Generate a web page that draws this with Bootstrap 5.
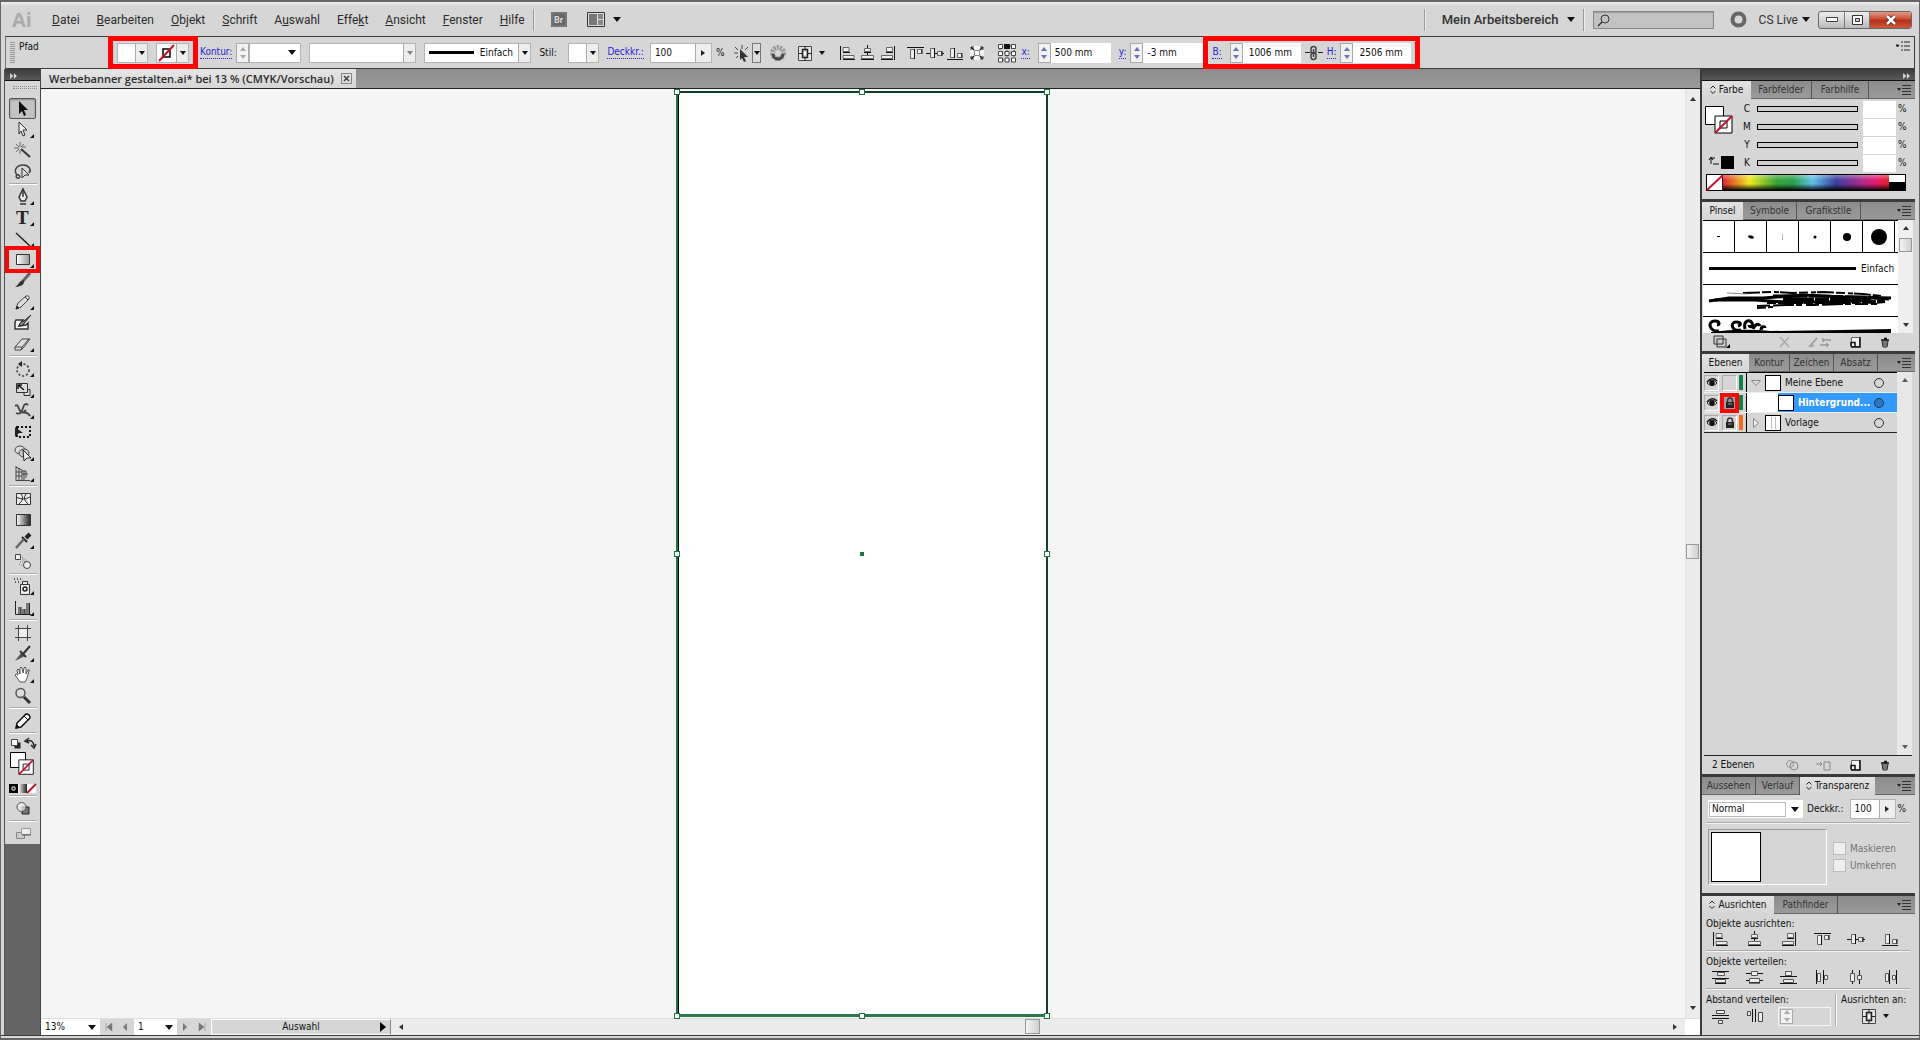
<!DOCTYPE html>
<html lang="de">
<head>
<meta charset="utf-8">
<meta name="viewport" content="width=device-width, initial-scale=1">
<title>Werbebanner gestalten.ai</title>
<link href="https://cdn.jsdelivr.net/npm/bootstrap@5.3.0/dist/css/bootstrap.min.css" rel="stylesheet">
<style>
:root{--face:#d6d6d6;--ink:#111;--edge:#3c3c3c;--ui:"DejaVu Sans Condensed","DejaVu Sans",sans-serif;--menu:Roboto,"Open Sans",sans-serif}
body{font-family:var(--ui);font-size:10px;line-height:12px;color:var(--ink);background:var(--face);overflow:hidden}
.app{height:100vh;border:1px solid #666;border-top-width:2px;border-bottom-width:2px}
button,input,select{font:inherit;color:inherit;border-radius:0;margin:0}
button{background:none;border:0;padding:0;line-height:0}
svg{display:block;overflow:visible}
.ico{width:20px;height:20px}
/* title and menu bar */
.titlebar{height:34px;font-family:var(--menu);font-size:12px;padding:1px 7px 0 11px;color:#333;background:linear-gradient(#f0f0f0,#d6d6d6 4px)}
.logo-ai{font:bold 20px "Open Sans",sans-serif;color:#aaa;width:40px}
.titlebar a{color:#2b2b2b;text-decoration:none}
.menu{gap:17px}
.vline{width:2px;height:22px;border-left:1px solid #999;border-right:1px solid #eee}
.space{font-size:13px;font-weight:500}
.search{width:121px;height:18px;background:#c2c2c2;border:1px solid #888;box-shadow:inset 0 1px 1px #999;position:relative}
.search input{width:100%;height:100%;background:none;border:0;padding:0 4px 0 22px}
.search svg{position:absolute;left:3px;top:2px}
.winbtns{border:1px solid #666;border-radius:3px;height:18px;overflow:hidden;background:linear-gradient(#eee,#bbb)}
.winbtns button{width:25px;height:16px;display:flex;align-items:center;justify-content:center}
.winbtns button+button{border-left:1px solid #777}
.winbtns .close-win{width:42px;background:linear-gradient(#e39a86,#cb4b33 45%,#b32c17 50%,#cf5a3d)}
/* control bar */
.control{height:33px;border:1px solid var(--edge);border-left-color:#777;margin:0 4px;background:var(--face);padding-left:4px}
.grip{width:5px;height:22px;background:repeating-linear-gradient(#999 0 1px,transparent 1px 2px)}
.objtype{width:89px}
.fld{background:#fff;border:1px solid #b4b4b4;height:20px}
.fld input{border:0;padding:0 0 0 4px;background:none;min-width:0;width:100%;height:100%}
.fld input.mm{padding-left:6px}
.w-sw{width:31px}.w-weight{width:52px}.w-combo{width:107px}.w-op{width:62px}.w-num{width:60px}.w-wh{width:58px}
.w-stil{width:33px}
.dd{width:12px;height:100%;background:#eee;border-left:1px solid #aaa;display:flex;align-items:center;justify-content:center;flex:none}
.dd.wide{width:16px}
.dd.pick{width:9px;height:20px;background:#ddd;border:1px solid #777}
.tri{width:0;height:0;border:4px solid transparent;border-top:5px solid #111;border-bottom:0;display:block}
.tri-s{border-width:3px;border-top-width:4px;border-bottom-width:0}
.tri-r{width:0;height:0;border:3px solid transparent;border-left:4px solid #222;border-right:0;display:block}
.lk{color:#2a22d8;text-decoration:none;border-bottom:1px dotted #2a22d8;line-height:12px}
.redbox+.lk{margin-left:2px}
.spin{width:13px;height:20px;border:1px solid #aaa;background:#f2f2f2;flex:none;display:flex;flex-direction:column;align-items:center;justify-content:center;gap:4px}
.spin::before,.spin::after{content:"";border:3px solid transparent}
.spin::before{border-bottom:4px solid #6a74b8;border-top:0}
.spin::after{border-top:4px solid #6a74b8;border-bottom:0}
.spin.off::before{border-bottom-color:#aaa}.spin.off::after{border-top-color:#aaa}
.redbox{border:5px solid #fb0505;height:33px;flex:none;padding:0 4px}
.lk+.w-op{margin-left:6px}
/* dock heads */
.dockhead{height:12px;background:linear-gradient(#3a3a3a,#5a5a5a);border-bottom:1px solid #111;flex:none}
/* tools */
.workspace{min-height:0}
.toolbox{width:37px;background:#646464;border-left:1px solid #555;border-right:1px solid #444;flex:none;margin-left:3px}
.toolset{background:var(--face);padding:0 3px 0 4px}
.hgrip{height:3px;width:24px;margin:5px 0 9px 4px;border-top:1px dotted #888;border-bottom:1px dotted #888}
.tool{width:27px;height:21px;position:relative;display:flex;align-items:center;justify-content:center}
.tool.sub::after{content:"";position:absolute;right:2px;bottom:2px;border:solid transparent;border-width:0 0 4px 4px;border-bottom-color:#111}
.tool.active{border:1px solid #555;border-radius:2px;background:#c4c4c4;box-shadow:inset 0 1px 2px #888}
.tool.marked::before{content:"";position:absolute;left:-4px;right:-4px;top:-3px;bottom:-3px;border:4px solid #fb0505;z-index:2}
.sep{height:2px;margin:1px 0;border-top:1px solid #aaa;border-bottom:1px solid #fff}
/* document */
.docpane{min-width:0}
.doctabs{height:20px;background:linear-gradient(#8d8d8d,#9b9b9b);border-bottom:1px solid #222;flex:none}
.doctab{background:linear-gradient(#e6e6e6,#d6d6d6);padding:0 4px 0 8px;gap:7px;font:600 11px/18px "Open Sans",sans-serif;color:#2b2b2b}
.tabx{width:11px;height:11px;border:1px solid #888}
.canvas{background:#f5f5f5;min-height:0}
.artwrap{padding:2px 0 1px}
.artboard{height:100%;aspect-ratio:372/925;background:#fff;position:relative;border:2px solid #1c7445;border-top-color:#123f29;border-bottom:3px solid #2a7a50;border-right-color:#123f29;box-shadow:inset 1px 0 #000;margin-right:2px}
.handles{position:absolute;inset:-1px -1px -2px -1px}
.hnd{position:absolute;width:6px;height:6px;background:#fff;border:1px solid #1c7445;transform:translate(-50%,-50%)}
.hnd.dot{width:4px;height:4px;background:#1c7445}
.x0{left:0}.x1{left:50%}.x2{left:100%}.y0{top:0}.y1{top:50%}.y2{top:100%}
.vscroll{width:15px;background:#ececec;border-left:1px solid #e4e4e4;flex:none}
.au,.ad{border:3px solid transparent;display:block;width:0}
.au{border-bottom:4px solid #333;border-top:0}.ad{border-top:4px solid #333;border-bottom:0}
.thumb{border:1px solid #999;background:linear-gradient(90deg,#f4f4f4,#cfcfcf);position:absolute}
.thumb.tv{left:0;right:1px;top:49%;height:15px}
.thumb.th{left:49%;width:15px;top:0;bottom:1px}
.thumb.tp{left:1px;width:13px;top:18px;height:14px}
.status{height:17px;background:var(--face);border-top:1px solid #ddd;flex:none}
.status>button{width:17px;display:flex;align-items:center;justify-content:center}
.pagebox{background:#fff;display:flex;align-items:center;justify-content:space-between;padding:0 4px}
.w-zoom{width:59px}.w-page{width:43px}
.statlabel{width:180px;border:1px solid #fff;border-right-color:#888;padding:0 4px 0 10px}
.hscroll{background:#ececec}
.corner{width:15px}
/* panels */
.panels{width:215px;border-left:2px solid #3a3a3a;background:var(--face);flex:none;margin-right:4px}
.ptabs{height:18px;background:linear-gradient(#8c8c8c,#9a9a9a);border-bottom:1px solid #666;flex:none}
.ptabs button{height:18px;line-height:16px;border-right:1px solid #555;color:#333;text-align:center;white-space:nowrap;overflow:hidden;display:flex;align-items:center;justify-content:center;gap:3px}
.ptabs .on{background:linear-gradient(#e2e2e2,#d6d6d6);color:#111;border-right:0}
.gap-dark{height:3px;background:#3a3a3a;flex:none}
.w40{width:41px}.w47{width:47px}.w49{width:49px}.w54{width:54px}.w61{width:61px}.w57{width:57px}.w64{width:64px}.w44{width:44px}.w75{width:75px}.w72{width:72px}
.colorbody{padding:1px 0 0 3px;height:75px}
.slide{width:101px;height:6px;border:1px solid #000;background:#d0d0d0;appearance:none;margin:0}
.slide::-webkit-slider-thumb{appearance:none;width:0;height:0}
.crow{height:18px;gap:5px}
.crow label{width:10px;text-align:center}
.crow .cval{width:33px;height:17px;border:0;background:#fff;margin-right:-3px}
.specwrap{padding:0 4px 8px}
.spectrum{height:17px;border:1px solid #000;display:flex;width:200px}
.rainbow{flex:1;background:linear-gradient(rgba(255,255,255,.35),transparent 35%,transparent 60%,rgba(0,0,0,.9)),linear-gradient(90deg,#e0252f,#f0ea20 16%,#3aa535 32%,#2d9f4a 42%,#62bfe8 54%,#3a3f9f 68%,#b02a8c 84%,#e61c6a 93%,#e02028)}
.bw{width:16px;background:linear-gradient(#fff 50%,#000 50%)}
.brushes{background:#fff;border-top:1px solid #000;height:113px;overflow:hidden;width:195px;margin-left:1px}
.bcell{width:32px;height:31px;border-right:1px solid #000;display:flex;align-items:center;justify-content:center}
.bline{height:32px;border-top:1px solid #000}
.sbar{width:15px;background:#efefef;position:relative;padding:6px 0}
.pfoot{height:18px;gap:17px;padding:0 23px 0 10px;flex:none}
.laybody{min-height:0;margin:0 3px 0 2px}
.layers{width:195px;border-top:1px solid #000}
.lrow{height:20px;border-bottom:1px solid #eee}
.lcell{width:15px;height:16px;border:1px solid #aaa;border-right-color:#fff;border-bottom-color:#fff;display:flex;align-items:center;justify-content:center}
.lcell+.lcell{margin-left:3px}
.lcell.redcell{box-shadow:0 0 0 2px #fb0505;border:2px solid #fb0505;background:#a0a0a0}
.lbar{width:4px;height:15px;margin:0 3px 0 2px;background:#138048}
.lbar.orange{background:#f26a1b}
.lthumb{width:16px;height:16px;border:1px solid #000;background:#fff}
.lname{border-left:1px solid #000;height:100%;padding-right:13px}
.lname.picked{background:linear-gradient(90deg,#fff 31px,#39f 31px);padding-left:31px;color:#fff;font-weight:bold}
.closed{margin:0 6px}
.ring{width:10px;height:10px;border:1px solid #333;border-radius:50%;margin-left:auto}
.picked .ring{background:#2678c4}
.hrule{height:2px;border-top:1px solid #aaa;border-bottom:1px solid #f4f4f4;margin:0 5px 0 4px}
.modes{height:27px;padding-left:6px}
.selwrap{width:95px;height:18px;background:#fff;position:relative}
.selwrap select{width:77px;height:15px;border:1px solid #bbb;background:#fff;appearance:none;padding:0 2px;position:relative;margin:2px 0 0 1px;display:block}
.selwrap .tri{position:absolute;right:4px;top:7px}
.w-top{width:46px;margin:0 2px 0 6px}
.transp{padding:5px 0 8px 6px}
.prev{width:119px;height:56px;border:1px solid #999;border-right-color:#fff;border-bottom-color:#fff;padding:2px}
.prev div{width:50px;height:50px;border:1px solid #000;background:#fff}
.opts{gap:4px;padding-left:6px}
.chk{appearance:none;width:13px;height:13px;background:#eee;border:1px solid #bbb}
.six{gap:14px;padding-left:8px;margin-top:-1px;padding-bottom:1px}
.plabel{padding:4px 0 0 4px}
.spread{height:45px;padding:4px 0 0 4px}
.spread-l{width:129px}
.spread-row{padding-left:4px;gap:14px}
.gapfld{width:53px;height:19px;padding:1px;border:1px solid #f4f4f4}
.vrule{width:2px;height:32px;border-left:1px solid #aaa;border-right:1px solid #fff}
.alignto{padding-left:18px}
.botframe{height:3px;background:var(--face);border-top:1px solid #3c3c3c;flex:none}
</style>
<script src="https://cdn.jsdelivr.net/npm/bootstrap@5.3.0/dist/js/bootstrap.bundle.min.js"></script>
</head>
<body>
<svg width="0" height="0" class="position-absolute">
<defs>
<linearGradient id="g1"><stop offset="0" stop-color="#fff"/><stop offset="1" stop-color="#999"/></linearGradient>
<linearGradient id="g2"><stop offset="0" stop-color="#fff"/><stop offset="1" stop-color="#222"/></linearGradient>
<g id="al"><path d="M3.500 3v14" stroke="#111"/><path d="M6 4.500h6v4H6zM6 12.500h11v3H6z" fill="#eee" stroke="#666"/><path d="M6 16.500h12M6 9.500h7" stroke="#111"/></g>
<g id="ac"><path d="M10.500 2v15" stroke="#111"/><path d="M7.500 5.500h6v3h-6zM4.500 12.500h12v3h-12z" fill="#eee" stroke="#666"/><path d="M4 16.500h13M7 9.500h7" stroke="#111"/></g>
<g id="ar"><path d="M17.500 3v14" stroke="#111"/><path d="M9.500 4.500h6v4h-6zM4.500 12.500h11v3h-11z" fill="#eee" stroke="#666"/><path d="M4 16.500h12M9 9.500h7" stroke="#111"/></g>
<g id="at"><path d="M2 4.500h17" stroke="#111"/><path d="M5.500 6.500h4v9h-4zM12.500 6.500h4v4h-4z" fill="#eee" stroke="#666"/><path d="M9.500 6v10M17 6v5" stroke="#111"/></g>
<g id="am"><path d="M1 10.500h18" stroke="#111"/><path d="M5.500 5.500h4v9h-4zM12.500 8.500h4v4h-4z" fill="#eee" stroke="#666"/><path d="M9.500 5v10M17 8v5" stroke="#111"/></g>
<g id="ab"><path d="M2 16.500h16" stroke="#111"/><path d="M5.500 5.500h4v9h-4zM12.500 10.500h4v4h-4z" fill="#eee" stroke="#666"/><path d="M9.500 5v10M17 10v5" stroke="#111"/></g>
<g id="dt"><path d="M2 4.500h17M2 11.500h17" stroke="#111"/><path d="M7.500 5.500h7v3h-7zM5.500 12.500h10v3h-10z" fill="#eee" stroke="#555"/><path d="M5 16.500h11" stroke="#111"/></g>
<g id="dm"><path d="M2 6.500h17M2 13.500h17" stroke="#111"/><path d="M7.500 4.500h6v4h-6zM5.500 11.500h10v4h-10z" fill="#eee" stroke="#555"/><path d="M5 16h11" stroke="#111"/></g>
<g id="db"><path d="M2 9.500h17M2 16.500h17" stroke="#111"/><path d="M7.500 4.500h6v4h-6zM5.500 12.500h10v3h-10z" fill="#eee" stroke="#555"/></g>
<g id="dl"><path d="M4.500 3v14M11.500 3v14" stroke="#111"/><path d="M5.500 6.500h3v8h-3zM12.500 8.500h3v4h-3z" fill="#eee" stroke="#555"/></g>
<g id="dc"><path d="M6.500 3v14M13.500 3v14" stroke="#111"/><path d="M4.500 6.500h4v8h-4zM11.500 8.500h4v4h-4z" fill="#eee" stroke="#555"/></g>
<g id="dr"><path d="M9.500 3v14M16.500 3v14" stroke="#111"/><path d="M5.500 6.500h3v8h-3zM12.500 8.500h3v4h-3z" fill="#eee" stroke="#555"/></g>
<g id="an"><path d="M3.500 3.500h13v14h-13z" fill="#e6e6e6" stroke="#444"/><path d="M7.500 6.500h5v8h-5z" fill="#ccc" stroke="#222" stroke-width="1.500"/><path d="M10 3v3M10 15v3M4 10.500h3M13 10.500h3" stroke="#222"/><path d="M9 9h2v3H9z" fill="#fff"/></g>
<g id="eye"><path d="M1 6Q6 0 11 6Q6 11 1 6z" fill="#fff" stroke="#222"/><path d="M1 5Q6-1 11 4" fill="none" stroke="#222" stroke-width="1.500"/><circle cx="6" cy="6" r="2.800" fill="#111"/></g>
<g id="lock"><path d="M2.500 6V4Q2.500 1 5 1T7.500 4V6" fill="none" stroke="#333" stroke-width="1.500"/><path d="M1 5h8v6H1z" fill="#222"/><path d="M3 7h4" stroke="#999"/></g>
<g id="pm"><path d="M0 3h4l-2 3z" fill="#222"/><path d="M5 .5h9M5 3.500h9M5 6.500h9M5 9.500h9" stroke="#333"/></g>
<g id="none"><path d="M1 1h17v17H1z" fill="#fff" stroke="#000"/><path d="M6 6h7v7H6z" fill="none" stroke="#000"/><path d="M1 18L18 1" stroke="#c8102e" stroke-width="2"/></g>
<g id="new"><path d="M2.500 1.500h8v9h-8z" fill="#f4f4f4" stroke="#666"/><path d="M2 10.500V6.500h4v4M11 1v10H2" fill="none" stroke="#111" stroke-width="1.500"/></g>
<g id="bin"><path d="M2 4h8M5 2.500h3" stroke="#111" stroke-width="1.500"/><path d="M3 5l1 6h4l1-6z" fill="#ccc" stroke="#222"/><path d="M5 6v4M7 6v4" stroke="#222"/></g>
<g id="dbl"><path d="M0 0l4 4-4 4zM5 0l4 4-4 4z" fill="#ddd"/></g>
<g id="ud"><path d="M.5 3.500L3 1l2.500 2.500M.5 6L3 8.500 5.500 6" fill="none" stroke="#222"/></g>
</defs>
</svg>
<div class="app d-flex flex-column">
<header class="titlebar d-flex align-items-center">
  <div class="logo-ai">Ai</div>
  <nav class="menu d-flex">
    <a href="#"><u>D</u>atei</a><a href="#"><u>B</u>earbeiten</a><a href="#"><u>O</u>bjekt</a><a href="#"><u>S</u>chrift</a><a href="#">A<u>u</u>swahl</a><a href="#">Effe<u>k</u>t</a><a href="#"><u>A</u>nsicht</a><a href="#"><u>F</u>enster</a><a href="#"><u>H</u>ilfe</a>
  </nav>
  <div class="vline ms-2"></div>
  <button class="ms-3" aria-label="Bridge"><svg width="16" height="15"><path d="M0 0h16v15H0z" fill="#666"/><path d="M1 1h14v13H1z" fill="none" stroke="#888"/><text x="3" y="11" font-size="9" font-weight="bold" fill="#ddd">Br</text></svg></button>
  <button class="d-flex align-items-center gap-2 ms-3 ps-1" aria-label="Dokumente anordnen"><svg width="18" height="15"><path d="M.5.5h17v14H.5z" fill="#ddd" stroke="#333"/><path d="M2 2h8v11H2z" fill="#777"/><path d="M11 2h5v5h-5zM11 8h5v5h-5z" fill="#888"/></svg><span class="tri"></span></button>
  <div class="ms-auto vline"></div>
  <button class="space d-flex align-items-center gap-2 ms-3 text-nowrap">Mein Arbeitsbereich <span class="tri"></span></button>
  <div class="vline mx-2"></div>
  <div class="search"><svg width="13" height="13"><circle cx="8" cy="5" r="4" fill="none" stroke="#333"/><path d="M5 8L1 12" stroke="#333" stroke-width="1.500"/></svg><input type="search" aria-label="Suchen"></div>
  <svg class="ms-3" width="17" height="17"><circle cx="8.500" cy="8.500" r="6" fill="none" stroke="#666" stroke-width="4"/></svg>
  <button class="d-flex align-items-center gap-1 ms-2 ps-1 text-nowrap">CS Live <span class="tri"></span></button>
  <div class="winbtns d-flex ms-2">
    <button aria-label="Minimieren"><svg width="12" height="5"><path d="M.5.5h11v4H.5z" fill="#fff" stroke="#444"/></svg></button>
    <button aria-label="Maximieren"><svg width="11" height="10"><path d="M.5.5h10v9H.5z" fill="#fff" stroke="#333"/><path d="M3.500 3.500h4v3h-4z" fill="#ccc" stroke="#333"/></svg></button>
    <button class="close-win" aria-label="Schließen"><svg width="12" height="10"><path d="M2 1l8 8M10 1L2 9" stroke="#5a2018" stroke-width="4"/><path d="M2 1l8 8M10 1L2 9" stroke="#fff" stroke-width="2.500"/></svg></button>
  </div>
</header>

<section class="control d-flex align-items-center" aria-label="Steuerung">
  <div class="grip"></div>
  <div class="objtype ms-1 align-self-start pt-1">Pfad</div>
  <div class="redbox gap-2 d-flex align-items-center">
    <button class="fld w-sw d-flex justify-content-end" aria-label="Fläche"><span class="dd"><i class="tri tri-s"></i></span></button>
    <button class="fld d-flex" aria-label="Konturfarbe"><svg width="19" height="18"><path d="M6 5h7v8H6z" fill="#fff" stroke="#000" stroke-width="1.500"/><path d="M2 17L17 1" stroke="#c8102e" stroke-width="2"/></svg><span class="dd"><i class="tri tri-s"></i></span></button>
  </div>
  <label class="lk" for="kont">Kontur:</label>
  <span class="spin off ms-1"></span>
  <div class="fld w-weight d-flex align-items-center pe-1"><input id="kont"><span class="tri"></span></div>
  <button class="fld w-combo d-flex justify-content-end ms-2" aria-label="Breitenprofil"><span class="dd"><i class="tri tri-s opacity-50"></i></span></button>
  <button class="fld w-combo d-flex align-items-center justify-content-between ms-2 ps-1"><svg width="45" height="3"><path d="M0 0h45v3H0z"/></svg><span>Einfach</span><span class="dd"><i class="tri tri-s"></i></span></button>
  <div class="w-stil ps-2">Stil:</div>
  <button class="fld w-sw d-flex justify-content-end ms-1" aria-label="Stil"><span class="dd"><i class="tri tri-s"></i></span></button>
  <label class="lk ms-2" for="op1">Deckkr.:</label>
  <div class="fld w-op d-flex"><input id="op1" value="100"><span class="dd wide"><i class="tri-r"></i></span></div>
  <span class="ms-1">%</span>
  <button class="d-flex align-items-center ms-2" aria-label="Ähnliche auswählen"><svg class="ico"><path d="M3 4l3 3M10 2v4M16 4l-3 3M2 10h4M4 15l2-2" stroke="#444"/><path d="M8 6l8 8-4 0 2 4-2 1-2-4-2 2z" fill="#333"/></svg><span class="dd pick"><i class="tri tri-s"></i></span></button>
  <svg class="ms-2" width="18" height="18"><circle cx="9" cy="9" r="5.500" fill="none" stroke="#999" stroke-width="5" stroke-dasharray="2 1"/><path d="M4 10a5 5 0 0 0 10 0" stroke="#444" stroke-width="3" fill="none"/></svg>
  <button class="d-flex align-items-center gap-1 ms-2" aria-label="Ausrichten an Zeichenfläche"><svg class="ico"><use href="#an"/></svg><i class="tri tri-s"></i></button>
  <div class="d-flex ms-2 ps-1">
    <button aria-label="Links ausrichten"><svg class="ico"><use href="#al"/></svg></button><button aria-label="Horizontal zentrieren"><svg class="ico"><use href="#ac"/></svg></button><button aria-label="Rechts ausrichten"><svg class="ico"><use href="#ar"/></svg></button></div>
  <div class="d-flex ms-2"><button aria-label="Oben ausrichten"><svg class="ico"><use href="#at"/></svg></button><button aria-label="Vertikal zentrieren"><svg class="ico"><use href="#am"/></svg></button><button aria-label="Unten ausrichten"><svg class="ico"><use href="#ab"/></svg></button></div>
  <button class="ms-1" aria-label="Isolieren"><svg width="16" height="16"><path d="M1 1h14v14H1z" fill="#f6f6f6"/><path d="M5.500 5.500h5v5h-5z" fill="#fff" stroke="#888"/><path d="M2 2l3 3M14 2l-3 3M2 14l3-3M14 14l-3-3" stroke="#111" stroke-width="1.500"/><path d="M2 2h3M2 2v3M14 2h-3M14 2v3M2 14h3M2 14v-3M14 14h-3M14 14v-3" stroke="#333"/></svg></button>
  <button class="ms-2 ps-1" aria-label="Bezugspunkt"><svg width="20" height="20"><path d="M3 3h14v14H3zM3 10h14M10 3v14" fill="none" stroke="#555" stroke-dasharray="1 1"/><path d="M1.500 1.500h4v4h-4zM14.500 1.500h4v4h-4zM1.500 8.500h4v4h-4zM8 8.500h4v4H8zM14.500 8.500h4v4h-4zM1.500 15h4v4h-4zM8 15h4v4H8zM14.500 15h4v4h-4z" fill="#fff" stroke="#444"/><path d="M7 1h6v5H7z" fill="#111"/></svg></button>
  <label class="lk ms-1" for="px">x:</label><span class="spin ms-2"></span><div class="fld w-num border-0"><input id="px" value="500 mm"></div>
  <label class="lk ms-2" for="py">y:</label><span class="spin ms-1"></span><div class="fld w-num border-0"><input id="py" value="-3 mm"></div>
  <div class="redbox d-flex align-items-center">
    <label class="lk" for="pb">B:</label><span class="spin ms-2"></span><div class="fld w-wh border-0"><input id="pb" value="1006 mm" class="mm"></div>
    <svg width="18" height="20" class="mx-1"><path d="M0 9.500h5M13 9.500h5" stroke="#222"/><rect x="6" y="3.500" width="5" height="7" rx="2.500" fill="none" stroke="#444" stroke-width="1.500"/><rect x="6" y="9.500" width="5" height="7" rx="2.500" fill="none" stroke="#444" stroke-width="1.500"/><path d="M8.500 6v8" stroke="#444" stroke-width="1.500"/></svg>
    <label class="lk" for="ph">H:</label><span class="spin ms-1"></span><div class="fld w-wh border-0"><input id="ph" value="2506 mm" class="mm"></div>
  </div>
  <button class="ms-auto align-self-start pt-1 pe-1" aria-label="Bedienfeldmenü"><svg width="14" height="10"><path d="M0 4h3l-1.500 2zM5 1h2M5 5h2M5 9h2" fill="#222" stroke="#222"/><path d="M8 1h6M8 5h6M8 9h6" stroke="#222"/></svg></button>
</section>

<main class="workspace d-flex flex-grow-1 overflow-hidden">
  <aside class="toolbox" aria-label="Werkzeuge">
    <div class="dockhead ps-1 pt-1"><svg width="9" height="6" viewBox="0 0 9 8"><use href="#dbl"/></svg></div>
    <div class="toolset d-flex flex-column">
      <div class="hgrip"></div>
      <button class="tool active" aria-label="Auswahl"><svg class="ico"><path d="M6 2l9 9-4 0 2 5-2 1-2-5-3 3z" fill="#111"/></svg></button>
      <button class="tool sub" aria-label="Direktauswahl"><svg class="ico"><path d="M6 2l8 8-4 0 2 5-2 1-2-5-2 3z" fill="#eee" stroke="#333"/></svg></button>
      <button class="tool" aria-label="Zauberstab"><svg class="ico"><path d="M8 8l9 8" stroke="#333" stroke-width="2"/><path d="M7 1v5M7 9v4M1 7h5M9 6h4M3 3l3 3M11 3l-3 3M3 11l3-3" stroke="#666"/></svg></button>
      <button class="tool" aria-label="Lasso"><svg class="ico"><path d="M4 13C0 8 4 3 10 3s9 5 6 8M4 13c-2 1 0 4 2 3s0-4-2-3" fill="none" stroke="#444" stroke-width="1.500"/><path d="M9 6l7 7-4 0-3 3z" fill="#ddd" stroke="#333"/></svg></button>
      <div class="sep"></div>
      <button class="tool sub" aria-label="Zeichenstift"><svg class="ico"><path d="M10 2l4 8-2 4H8l-2-4z" fill="#eee" stroke="#333" stroke-width="1.500"/><path d="M10 3v7M7 17h6" stroke="#333" stroke-width="1.500"/></svg></button>
      <button class="tool sub" aria-label="Text"><svg class="ico"><text x="3" y="16" font-family="Liberation Serif,serif" font-weight="bold" font-size="19" fill="#222">T</text></svg></button>
      <button class="tool sub" aria-label="Liniensegment"><svg class="ico"><path d="M3 4l14 13" stroke="#222" stroke-width="1.500"/></svg></button>
      <button class="tool sub marked" aria-label="Rechteck"><svg class="ico"><path d="M3.500 4.500h13v10h-13z" fill="url(#g1)" stroke="#333"/></svg></button>
      <button class="tool" aria-label="Pinsel"><svg class="ico"><path d="M17 2l-7 8" stroke="#666" stroke-width="3"/><path d="M11 9c1 5-4 7-9 7 4-2 4-7 9-7z" fill="#333"/></svg></button>
      <button class="tool sub" aria-label="Buntstift"><svg class="ico"><path d="M3 17l2-6 8-7q4-1 3 3l-8 8z" fill="#ddd" stroke="#444"/><path d="M3 17l1-3 2 2zM12 5l3 3" fill="#111" stroke="#333"/></svg></button>
      <button class="tool" aria-label="Tropfenpinsel"><svg class="ico"><path d="M3 7h7l-4 6 7-1 2-2v6H2V9z" fill="#f4f4f4" stroke="#333" stroke-width="1.500"/><path d="M18 2l-6 7q-1 4-6 4 1-5 5-5z" fill="#888" stroke="#222"/></svg></button>
      <button class="tool sub" aria-label="Radiergummi"><svg class="ico"><path d="M2 13l7-8h8l-6 8-3 3H2z" fill="#ddd" stroke="#444"/><path d="M2 13h7l-1 3M9 13l7-8" fill="none" stroke="#444"/></svg></button>
      <div class="sep"></div>
      <button class="tool sub" aria-label="Drehen"><svg class="ico"><circle cx="10" cy="11" r="6" fill="none" stroke="#333" stroke-width="1.500" stroke-dasharray="2 2"/><path d="M9 2v6L5 5z" fill="#222"/></svg></button>
      <button class="tool sub" aria-label="Skalieren"><svg class="ico"><path d="M3.500 3.500h11v9h-11zM14 9.500h3v6h-6v-3" fill="#ddd" stroke="#333"/><path d="M5 5l6 5M5 9V5h4" fill="none" stroke="#111" stroke-width="1.500"/></svg></button>
      <button class="tool sub" aria-label="Verkrümmen"><svg class="ico"><path d="M2 5c4-3 3 4 6 6s6-2 9 4M3 12c4 2 6-1 7-5s3-5 5-3M13 9l-3 3" fill="none" stroke="#444" stroke-width="1.800"/></svg></button>
      <button class="tool" aria-label="Frei transformieren"><svg class="ico"><path d="M4 5h13v10H4z" fill="none" stroke="#111" stroke-width="2" stroke-dasharray="2 2"/><path d="M2 5l8 6-4 0-4 4z" fill="#222"/></svg></button>
      <button class="tool sub" aria-label="Formerstellung"><svg class="ico"><ellipse cx="7" cy="7" rx="5" ry="4" fill="#ddd" stroke="#444"/><ellipse cx="11" cy="10" rx="5" ry="4" fill="#ccc" stroke="#444"/><path d="M10 7l8 8-4 0-3 3z" fill="#eee" stroke="#222"/></svg></button>
      <button class="tool sub" aria-label="Perspektivenraster"><svg class="ico"><path d="M3 2v15M3 3l6 3v11M6 4v13M3 8h6M3 12h6M9 7h4v7M9 10h6M3 16.500h14M11 7v9" fill="none" stroke="#444"/></svg></button>
      <div class="sep"></div>
      <button class="tool" aria-label="Gitter"><svg class="ico"><path d="M3.500 4.500h14v11h-14zM3 8q7 4 14 0M8 5q4 5-2 10M13 5q-4 5 2 10" fill="#eee" stroke="#333"/></svg></button>
      <button class="tool" aria-label="Verlauf"><svg class="ico"><path d="M3.500 4.500h14v11h-14z" fill="url(#g2)" stroke="#333"/></svg></button>
      <button class="tool sub" aria-label="Pipette"><svg class="ico"><path d="M17 3l-4 4" stroke="#222" stroke-width="4"/><path d="M9 6l5 5" stroke="#222" stroke-width="2"/><path d="M11 8l-8 9" stroke="#666" stroke-width="2.500"/></svg></button>
      <button class="tool" aria-label="Angleichen"><svg class="ico"><path d="M2.500 2.500h5v5h-5z" fill="#eee" stroke="#444"/><path d="M7 10h7M9 7l6 5M6 12l6 3M9 5l6 5" stroke="#777" stroke-dasharray="1 1"/><circle cx="14" cy="13" r="3.500" fill="#eee" stroke="#444"/></svg></button>
      <div class="sep"></div>
      <button class="tool sub" aria-label="Symbol aufsprühen"><svg class="ico"><path d="M7.500 7.500h9v10h-9zM9.500 4.500h5v3h-5z" fill="#eee" stroke="#333"/><circle cx="12" cy="12" r="2" fill="none" stroke="#222" stroke-width="1.500"/><path d="M1 2h8M2 5h6" stroke="#333" stroke-width="1.500" stroke-dasharray="1 2"/></svg></button>
      <button class="tool sub" aria-label="Diagramm"><svg class="ico"><path d="M2.500 3v13.500H18" fill="none" stroke="#222"/><path d="M5 9h3v7H5zM9 11h3v5H9zM13 5h3v11h-3z" fill="#777"/><path d="M8 9v7M12 11v5M16.500 5v11" stroke="#222"/></svg></button>
      <div class="sep"></div>
      <button class="tool" aria-label="Zeichenfläche"><svg class="ico"><path d="M5.500 5.500h9v9h-9z" fill="#eee" stroke="#222"/><path d="M5.500 2v16M14.500 2v16M2 5.500h16M2 14.500h16" stroke="#444"/></svg></button>
      <button class="tool sub" aria-label="Slice"><svg class="ico"><path d="M2 17l6-8 4 3z" fill="#555"/><path d="M17 2l-7 8M7 7l6 6" stroke="#333" stroke-width="2"/></svg></button>
      <button class="tool sub" aria-label="Hand"><svg class="ico"><path d="M7 17L2 10q1-2 3 0L4 5q1-2 2 0l1 4V3q1-2 2 0l1 5 1-5q1-2 2 0l0 6 2-4q2-1 1 1l-2 7-2 4z" fill="#fff" stroke="#555"/></svg></button>
      <button class="tool" aria-label="Zoom"><svg class="ico"><circle cx="7.500" cy="7" r="4.500" fill="#ddd" stroke="#555" stroke-width="1.500"/><path d="M11 11l6 6" stroke="#333" stroke-width="3"/></svg></button>
      <div class="sep"></div>
      <button class="tool" aria-label="Pfadstift"><svg class="ico"><path d="M3 17l1-5 9-9q4 0 4 4l-9 9z" fill="#fff" stroke="#111" stroke-width="1.500"/><path d="M11 5l4 4M3 17l1-3 2 2z" fill="#111" stroke="#111"/></svg></button>
      <div class="sep"></div>
      <svg width="28" height="59" aria-hidden="true"><path d="M5.500 7.500h6v6h-6z" fill="#222"/><path d="M2.500 4.500h6v6h-6z" fill="#fff" stroke="#444"/><path d="M18 6q6-2 7 5M20 3l-4 3 4 2M22 10l3 3 2-4" fill="none" stroke="#222" stroke-width="1.500"/><path d="M1.500 17.500h15v15h-15z" fill="#fff" stroke="#000"/><use href="#none" transform="translate(9 24) scale(.85)"/><path d="M0 49h9v9H0z"/><path d="M3 52h3v3H3z" fill="none" stroke="#eee"/><path d="M9 49h9v9H9z" fill="url(#g2)"/><path d="M18 49h9v9h-9z" fill="#fff"/><path d="M18 58l9-9" stroke="#c8102e" stroke-width="2"/></svg>
      <div class="sep"></div>
      <button class="tool" aria-label="Zeichenmodus"><svg class="ico"><path d="M9 8h7v7H9z" fill="#777" stroke="#222"/><circle cx="8.500" cy="8" r="4.500" fill="#eee" fill-opacity=".7" stroke="#555"/></svg></button>
      <div class="sep"></div>
      <button class="tool" aria-label="Bildschirmmodus"><svg class="ico"><path d="M3.500 8.500h8v6h-8z" fill="#ccc" stroke="#888"/><path d="M8.500 4.500h9v6h-9z" fill="#eee" stroke="#999"/><path d="M9 11h9" stroke="#555"/></svg></button>
    </div>
  </aside>

  <section class="docpane d-flex flex-column flex-grow-1">
    <div class="doctabs d-flex">
      <div class="doctab d-flex align-items-center"><span>Werbebanner gestalten.ai* bei 13 % (CMYK/Vorschau)</span><button class="tabx" aria-label="Tab schließen"><svg width="9" height="9"><path d="M2 2l5 5M7 2L2 7" stroke="#444" stroke-width="1.500"/></svg></button></div>
    </div>
    <div class="canvas d-flex flex-grow-1">
      <div class="artwrap flex-grow-1 d-flex justify-content-center">
        <div class="artboard"><div class="handles">
          <i class="hnd x0 y0"></i><i class="hnd x1 y0"></i><i class="hnd x2 y0"></i>
          <i class="hnd x0 y1"></i><i class="hnd dot x1 y1"></i><i class="hnd x2 y1"></i>
          <i class="hnd x0 y2"></i><i class="hnd x1 y2"></i><i class="hnd x2 y2"></i>
        </div></div>
      </div>
      <div class="vscroll position-relative d-flex flex-column justify-content-between align-items-center py-2"><i class="au"></i><i class="thumb tv"></i><i class="ad"></i></div>
    </div>
    <footer class="status d-flex">
      <div class="pagebox w-zoom">13%<span class="tri"></span></div>
      <button aria-label="Erste"><svg width="7" height="8"><path d="M1 0v8M7 0v8L2 4z" stroke="#777" fill="#777" stroke-width=".5"/></svg></button>
      <button aria-label="Zurück"><svg width="5" height="8"><path d="M4 0v8L0 4z" fill="#777"/></svg></button>
      <div class="pagebox w-page">1<span class="tri"></span></div>
      <button aria-label="Weiter"><svg width="5" height="8"><path d="M0 0v8l4-4z" fill="#777"/></svg></button>
      <button aria-label="Letzte"><svg width="7" height="8"><path d="M6 0v8M0 0v8l5-4z" stroke="#777" fill="#777" stroke-width=".5"/></svg></button>
      <div class="statlabel d-flex align-items-center"><span class="flex-grow-1 text-center">Auswahl</span><svg width="6" height="10"><path d="M0 0v10l6-5z"/></svg></div>
      <div class="hscroll flex-grow-1 position-relative d-flex align-items-center justify-content-between px-2"><svg width="4" height="6"><path d="M4 0v6L0 3z" fill="#333"/></svg><i class="thumb th"></i><svg width="4" height="6"><path d="M0 0v6l4-3z" fill="#333"/></svg></div>
      <div class="corner bg-white"></div>
    </footer>
  </section>

  <aside class="panels d-flex flex-column">
    <div class="dockhead d-flex justify-content-end pe-1 pt-1"><svg width="9" height="6" viewBox="0 0 9 8"><use href="#dbl"/></svg></div>
    <div class="ptabs d-flex align-items-center"><button class="on w49"><svg width="6" height="9"><use href="#ud"/></svg>Farbe</button><button class="w61">Farbfelder</button><button class="w57">Farbhilfe</button><svg class="ms-auto me-1" width="14" height="10"><use href="#pm"/></svg></div>
    <div class="colorbody d-flex">
      <svg width="37" height="74"><path d="M.5 6.500h18v18H.5z" fill="#fff" stroke="#000"/><use href="#none" transform="translate(9 15)"/><path d="M16 56h13v13H16z"/><path d="M6 64V58h4M4 60l2-3 2 3M8 64h6" fill="none" stroke="#111"/></svg>
      <div>
        <div class="crow d-flex align-items-center"><label for="c1">C</label><input type="range" class="slide" id="c1"><input class="cval" aria-label="C Wert">%</div>
        <div class="crow d-flex align-items-center"><label for="c2">M</label><input type="range" class="slide" id="c2"><input class="cval" aria-label="M Wert">%</div>
        <div class="crow d-flex align-items-center"><label for="c3">Y</label><input type="range" class="slide" id="c3"><input class="cval" aria-label="Y Wert">%</div>
        <div class="crow d-flex align-items-center"><label for="c4">K</label><input type="range" class="slide" id="c4"><input class="cval" aria-label="K Wert">%</div>
      </div>
    </div>
    <div class="specwrap"><div class="spectrum"><svg width="16" height="15" class="bg-white border-end border-dark"><path d="M0 15L16 0" stroke="#c8102e" stroke-width="2"/></svg><div class="rainbow"></div><div class="bw"></div></div></div>
    <div class="gap-dark"></div>

    <div class="ptabs d-flex align-items-center"><button class="on w40">Pinsel</button><button class="w54">Symbole</button><button class="w64">Grafikstile</button><svg class="ms-auto me-1" width="14" height="10"><use href="#pm"/></svg></div>
    <div class="d-flex">
      <div class="brushes">
        <div class="d-flex"><div class="bcell"><svg width="4" height="2"><path d="M0 0h3v1H0z"/></svg></div><div class="bcell"><svg width="6" height="4"><ellipse cx="3" cy="2" rx="3" ry="1.500" transform="rotate(15 3 2)"/></svg></div><div class="bcell"><svg width="1" height="6"><path d="M0 0h1v6H0z" fill="#bbb"/></svg></div><div class="bcell"><svg width="4" height="4"><circle cx="2" cy="2" r="1.500"/></svg></div><div class="bcell"><svg width="8" height="8"><circle cx="4" cy="4" r="4"/></svg></div><div class="bcell"><svg width="16" height="16"><circle cx="8" cy="8" r="8"/></svg></div></div>
        <div class="bline d-flex align-items-center ps-1"><svg width="150" height="3"><path d="M2 0h147v3H2z"/></svg><span class="ms-1">Einfach</span></div>
        <div class="bline"><svg width="194" height="31"><g fill="none" stroke="#000"><path d="M6 16l20-3 34 0 40-3 40 2 30 1 16 1" stroke-width="3"/><path d="M12 15l40 0 30 2 50 0 36-2" stroke-width="3"/><path d="M40 8l30-1 20 1 30-1 40 2 18 2" stroke-width="2" stroke-dasharray="17 2 9 3 5 1"/><path d="M70 11l40 0 50 1 28 1" stroke-width="3" stroke-dasharray="22 1 11 2"/><path d="M54 21l30-1 26 0 30-1 34 0" stroke-width="2" stroke-dasharray="13 3 21 2 6 4"/><path d="M54 23l16-1M64 18l50 0 40 0" stroke-width="2" stroke-dasharray="9 2 25 1"/><path d="M80 14l60 1 30 2 12-1" stroke-width="4" stroke-dasharray="31 1 14 1"/><path d="M24 8l20 1" stroke="#888"/></g></svg></div>
        <div class="bline"><svg width="194" height="16"><path d="M16 14C6 15 4 4 12 4c5 0 5 4 2 4M38 13C28 15 27 5 33 5s5 3 2 4M42 12c-2-9 5-10 7-6s-3 5-3 2M50 12c2-5 6-6 7-3M58 13c0-4 4-4 4-2" fill="none" stroke="#000" stroke-width="3"/><path d="M8 15q30-4 60-1l70-1 50-1v4H8z"/></svg></div>
      </div>
      <div class="sbar d-flex flex-column justify-content-between align-items-center"><i class="au"></i><i class="thumb tp"></i><i class="ad"></i></div>
    </div>
    <div class="pfoot d-flex align-items-center"><svg width="18" height="14"><path d="M2 1h9v8H2zM5 4h9v8H5z" fill="#ccc" stroke="#333"/><path d="M18 9v4h-4z"/></svg><svg class="ms-auto" width="12" height="12"><path d="M1 1l9 10M10 1L1 11" stroke="#aaa" stroke-width="1.500"/></svg><svg width="24" height="12"><path d="M1 11L9 2M3 11l3-2M14 4h9M12 9h9M15 2v4M19 7v4" stroke="#999" stroke-width="1.500"/></svg><svg width="13" height="13"><use href="#new"/></svg><svg width="13" height="13"><use href="#bin"/></svg></div>
    <div class="gap-dark"></div>

    <div class="ptabs d-flex align-items-center"><button class="on w47">Ebenen</button><button class="w40">Kontur</button><button class="w44">Zeichen</button><button class="w44">Absatz</button><svg class="ms-auto me-1" width="14" height="10"><use href="#pm"/></svg></div>
    <div class="laybody d-flex flex-grow-1 border-bottom border-dark">
      <div class="layers">
        <div class="lrow d-flex align-items-center">
          <span class="lcell"><svg width="12" height="12"><use href="#eye"/></svg></span><span class="lcell"></span><span class="lbar"></span>
          <div class="lname flex-grow-1 d-flex align-items-center"><svg width="10" height="6" class="mx-1"><path d="M.5.5h9l-4.500 5z" fill="#ddd" stroke="#888"/></svg><span class="lthumb"></span><span class="ms-1">Meine Ebene</span><i class="ring"></i></div>
        </div>
        <div class="lrow d-flex align-items-center">
          <span class="lcell"><svg width="12" height="12"><use href="#eye"/></svg></span><span class="lcell redcell"><svg width="10" height="12"><use href="#lock"/></svg></span><span class="lbar"></span>
          <div class="lname picked flex-grow-1 d-flex align-items-center"><span class="lthumb me-1"></span>Hintergrund...<i class="ring"></i></div>
        </div>
        <div class="lrow d-flex align-items-center border-dark">
          <span class="lcell"><svg width="12" height="12"><use href="#eye"/></svg></span><span class="lcell"><svg width="10" height="12"><use href="#lock"/></svg></span><span class="lbar orange"></span>
          <div class="lname flex-grow-1 d-flex align-items-center"><svg width="6" height="10" class="closed"><path d="M.5.5v9l5-4.500z" fill="#eee" stroke="#888"/></svg><span class="lthumb"><svg width="14" height="14"><path d="M5.500 1v12M9.500 1v12" stroke="#bbb"/></svg></span><span class="ms-1">Vorlage</span><i class="ring"></i></div>
        </div>
      </div>
      <div class="sbar d-flex flex-column justify-content-between align-items-center opacity-75"><i class="au"></i><i class="ad"></i></div>
    </div>
    <div class="pfoot d-flex align-items-center"><span>2 Ebenen</span><svg class="ms-auto" width="14" height="12"><circle cx="5" cy="5" r="3.500" fill="none" stroke="#999"/><circle cx="9" cy="7" r="4" fill="none" stroke="#888"/></svg><svg width="16" height="12"><path d="M0 5h6M4 3l2 2-2 2M8 3h6v8H8z" fill="none" stroke="#888"/></svg><svg width="13" height="13"><use href="#new"/></svg><svg width="13" height="13"><use href="#bin"/></svg></div>
    <div class="gap-dark"></div>

    <div class="ptabs d-flex align-items-center"><button class="w54">Aussehen</button><button class="w44">Verlauf</button><button class="on w75"><svg width="6" height="9"><use href="#ud"/></svg>Transparenz</button><svg class="ms-auto me-1" width="14" height="10"><use href="#pm"/></svg></div>
    <div class="modes d-flex align-items-center">
      <div class="selwrap"><select aria-label="Füllmethode"><option>Normal</option></select><i class="tri"></i></div>
      <label class="ms-1" for="op2">Deckkr.:</label>
      <div class="fld w-top d-flex"><input id="op2" value="100"><span class="dd wide"><i class="tri-r"></i></span></div>%
    </div>
    <div class="hrule"></div>
    <div class="transp d-flex">
      <div class="prev"><div></div></div>
      <div class="opts text-black-50 d-flex flex-column justify-content-center">
        <label class="d-flex align-items-center gap-1"><input type="checkbox" class="chk" disabled>Maskieren</label>
        <label class="d-flex align-items-center gap-1"><input type="checkbox" class="chk" disabled>Umkehren</label>
      </div>
    </div>
    <div class="gap-dark"></div>

    <div class="ptabs d-flex align-items-center"><button class="on w72"><svg width="6" height="9"><use href="#ud"/></svg>Ausrichten</button><button class="w64">Pathfinder</button><svg class="ms-auto me-1" width="14" height="10"><use href="#pm"/></svg></div>
    <div class="plabel">Objekte ausrichten:</div>
    <div class="d-flex six"><svg class="ico"><use href="#al"/></svg><svg class="ico"><use href="#ac"/></svg><svg class="ico"><use href="#ar"/></svg><svg class="ico"><use href="#at"/></svg><svg class="ico"><use href="#am"/></svg><svg class="ico"><use href="#ab"/></svg></div>
    <div class="hrule"></div>
    <div class="plabel">Objekte verteilen:</div>
    <div class="d-flex six"><svg class="ico"><use href="#dt"/></svg><svg class="ico"><use href="#dm"/></svg><svg class="ico"><use href="#db"/></svg><svg class="ico"><use href="#dl"/></svg><svg class="ico"><use href="#dc"/></svg><svg class="ico"><use href="#dr"/></svg></div>
    <div class="hrule"></div>
    <div class="spread d-flex">
      <div class="spread-l"><div>Abstand verteilen:</div>
        <div class="spread-row d-flex align-items-center"><svg class="ico"><path d="M2 9.500h17M2 12.500h17" stroke="#111"/><path d="M6.500 4.500h8v3h-8zM8.500 14.500h4v3h-4z" fill="#eee" stroke="#444"/></svg><svg class="ico"><path d="M8.500 3v13M11.500 3v13" stroke="#111"/><path d="M3.500 5.500h3v4h-3zM14.500 6.500h4v9h-4z" fill="#eee" stroke="#444"/></svg>
        <div class="gapfld d-flex"><span class="spin off h-100"></span></div></div></div>
      <div class="vrule"></div>
      <div class="ps-1 text-nowrap">Ausrichten an:<button class="alignto d-flex align-items-center gap-1" aria-label="Ausrichten an"><svg class="ico"><use href="#an"/></svg><i class="tri tri-s"></i></button></div>
    </div>
  </aside>
</main>
<div class="botframe"></div>
</div>
</body>
</html>
